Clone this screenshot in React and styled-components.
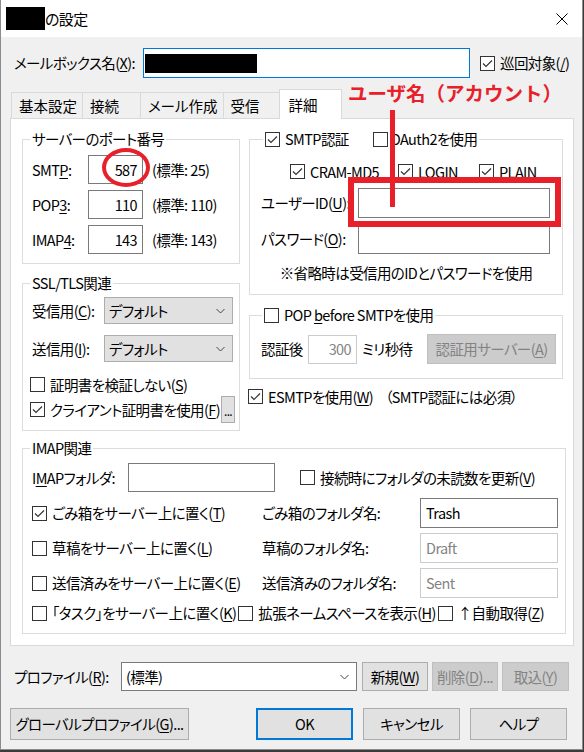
import React from 'react'
import styled, { createGlobalStyle, css } from 'styled-components'

const GlobalStyle = createGlobalStyle`
  html, body { margin: 0; padding: 0; background: #3b3b3b; }
  body {
    font-family: "Noto Sans CJK JP", "Noto Sans", sans-serif;
    font-size: 14.5px;
    letter-spacing: -0.6px;
    color: #000;
    font-feature-settings: "palt";
  }
  * { box-sizing: border-box; }
  u { text-underline-offset: 2px; }
`

// ---- window frame ----
const Window = styled.div`
  position: relative;
  width: 583px;
  height: 750px;
  background: #f0f0f0;
  border: 1px solid #8c8c8c;
  border-top: none;
  display: flex;
  flex-direction: column;
`

const TitleBar = styled.div`
  height: 37px;
  background: #fff;
  display: flex;
  align-items: center;
  padding: 0 14px 0 5px;
  font-size: 15px;
`

const Redact = styled.div`
  background: #000;
  width: ${p => p.$w}px;
  height: ${p => p.$h}px;
`

const TitleText = styled.span`
  flex: 1;
  line-height: 20px;
`

const Body = styled.div`
  padding: 0 8px 0 9px;
  display: flex;
  flex-direction: column;
`

// ---- generic controls ----
const Row = styled.div`
  display: flex;
  align-items: center;
  height: ${p => p.$h || 30}px;
  margin-top: ${p => p.$mt || 0}px;
  margin-left: ${p => p.$ml || 0}px;
  padding-right: ${p => p.$pr || 0}px;
`

const Label = styled.span`
  width: ${p => (p.$w ? `${p.$w}px` : 'auto')};
  flex-shrink: 0;
  white-space: nowrap;
  line-height: 20px;
  margin-left: ${p => p.$ml || 0}px;
`

const TextBox = styled.div`
  width: ${p => p.$w}px;
  height: ${p => p.$h || 29}px;
  flex-shrink: 0;
  background: #fff;
  border: 1px solid ${p => (p.$focus ? '#0078d7' : p.$disabled ? '#cccccc' : '#7a7a7a')};
  color: ${p => (p.$disabled ? '#838383' : '#000')};
  display: flex;
  align-items: center;
  justify-content: ${p => (p.$right ? 'flex-end' : 'flex-start')};
  padding: 0 5px 0 ${p => p.$pl ?? 5}px;
  margin-left: ${p => p.$ml || 0}px;
  line-height: 20px;
`

const Box = styled.span`
  width: 15px;
  height: 15px;
  flex-shrink: 0;
  border: 1px solid #333;
  background: #fff;
  display: inline-flex;
  align-items: center;
  justify-content: center;
`

const CheckWrap = styled.span`
  display: inline-flex;
  align-items: center;
  gap: 5px;
  white-space: nowrap;
  line-height: 20px;
  width: ${p => (p.$w ? `${p.$w}px` : 'auto')};
  flex-shrink: 0;
  margin-left: ${p => (p.$ml === 'auto' ? 'auto' : `${p.$ml || 0}px`)};
`

function Check({ checked, children, w, ml }) {
  return (
    <CheckWrap $w={w} $ml={ml}>
      <Box>
        {checked && (
          <svg width="13" height="13" viewBox="0 0 13 13">
            <polyline points="2,6.5 5,9.5 11,3.5" fill="none" stroke="#333" strokeWidth="1.2" />
          </svg>
        )}
      </Box>
      {children && <span>{children}</span>}
    </CheckWrap>
  )
}

const SelectBox = styled.div`
  width: ${p => p.$w}px;
  height: ${p => p.$h || 27}px;
  flex-shrink: 0;
  display: flex;
  align-items: center;
  justify-content: space-between;
  padding: 0 7px 0 4px;
  line-height: 20px;
  ${p => (p.$white
    ? css`background: #fff; border: 1px solid #7a7a7a;`
    : css`background: #e1e1e1; border: 1px solid #adadad;`)}
`

function Select({ w, h, white, children }) {
  return (
    <SelectBox $w={w} $h={h} $white={white}>
      <span>{children}</span>
      <svg width="9" height="6" viewBox="0 0 9 6">
        <polyline points="0.5,1 4.5,5 8.5,1" fill="none" stroke="#444" strokeWidth="1" />
      </svg>
    </SelectBox>
  )
}

const Button = styled.div`
  width: ${p => p.$w}px;
  height: ${p => p.$h || 30}px;
  flex-shrink: 0;
  display: flex;
  align-items: center;
  justify-content: center;
  white-space: nowrap;
  line-height: 20px;
  margin-left: ${p => (p.$ml === 'auto' ? 'auto' : `${p.$ml || 0}px`)};
  background: ${p => (p.$disabled ? '#cccccc' : '#e1e1e1')};
  border: ${p => (p.$default ? '2px solid #0078d7' : `1px solid ${p.$disabled ? '#bfbfbf' : '#adadad'}`)};
  color: ${p => (p.$disabled ? '#838383' : '#000')};
`

// ---- tabs ----
const TabStrip = styled.div`
  display: flex;
  align-items: flex-end;
  height: 29px;
  margin-top: 11px;
  padding-left: 1px;
`

const Tab = styled.div`
  height: 26px;
  min-width: 59px;
  padding: 0 5px 0 7px;
  display: flex;
  align-items: center;
  background: #f0f0f0;
  border: 1px solid #d9d9d9;
  border-bottom: none;
  margin-right: -1px;
  line-height: 20px;
  letter-spacing: 0;
  ${p => p.$active && css`
    position: relative;
    z-index: 1;
    height: 30px;
    margin: 0 -2px -1px -2px;
    min-width: 63px;
    padding-left: 9px;
    background: #fff;
  `}
`

const Panel = styled.div`
  background: #fff;
  border: 1px solid #d9d9d9;
  padding: 11px 7px 11px 11px;
`

const Columns = styled.div`
  display: flex;
  gap: 9px;
  padding-right: 3px;
`

const Column = styled.div`
  width: ${p => p.$w}px;
  display: flex;
  flex-direction: column;
`

// ---- group boxes ----
const Group = styled.fieldset`
  margin: ${p => p.$mt || 0}px 0 0 0;
  min-width: 0;
  border: 1px solid #dcdcdc;
  padding: ${p => p.$pad};
  display: flex;
  flex-direction: column;
`

const Legend = styled.legend`
  padding: 0 2px;
  margin-left: ${p => p.$ml ?? -2}px;
  line-height: 18px;
  height: 18px;
  display: flex;
  align-items: center;
`

const Stack = styled.div`
  display: flex;
  flex-direction: column;
  gap: ${p => p.$gap || 0}px;
  margin-top: ${p => p.$mt || 0}px;
`

const Hint = styled.span`
  margin-left: 9px;
  white-space: nowrap;
  line-height: 20px;
`

const Note = styled.div`
  margin-top: 9px;
  height: 20px;
  line-height: 20px;
  text-align: center;
`

const DotsButton = styled.div`
  width: 17px;
  height: 27px;
  margin-left: 1px;
  background: #e1e1e1;
  border: 1px solid #adadad;
  display: flex;
  align-items: flex-end;
  justify-content: center;
  padding-bottom: 5px;
  font-size: 12px;
  line-height: 12px;
`

const ImapGrid = styled.div`
  display: grid;
  grid-template-columns: 230px 158px 138px;
  grid-auto-rows: 30px;
  row-gap: 5px;
  margin-top: 6px;
  align-items: center;
`

const Footer = styled.div`
  display: flex;
  align-items: center;
  height: ${p => p.$h}px;
  margin-top: ${p => p.$mt}px;
  padding-left: ${p => p.$pl || 0}px;
`

const ButtonGroup = styled.div`
  display: flex;
  gap: 10px;
  margin-left: auto;
  margin-right: 7px;
`

// ---- red annotations drawn over the dialog ----
const Callout = styled.span`
  position: absolute;
  left: 347px;
  top: 81px;
  color: #e8202a;
  font-size: 19.5px;
  font-weight: 700;
  line-height: 24px;
  letter-spacing: 0;
  font-feature-settings: normal;
  white-space: nowrap;
`

const CalloutLine = styled.div`
  position: absolute;
  left: 389px;
  top: 110px;
  width: 5px;
  height: 97px;
  background: #e8202a;
`

const CalloutRect = styled.div`
  position: absolute;
  left: 347px;
  top: 177px;
  width: 213px;
  height: 50px;
  border: 6px solid #e8202a;
`

const CalloutRing = styled.div`
  position: absolute;
  left: 101px;
  top: 148px;
  width: 48px;
  height: 39px;
  border: 4px solid #e8202a;
  border-radius: 50%;
`

export default function App() {
  return (
    <>
      <GlobalStyle />
      <Window>
        <TitleBar>
          <Redact $w={39} $h={23} />
          <TitleText>の設定</TitleText>
          <svg width="12" height="12" viewBox="0 0 12 12">
            <path d="M0.5 0.5 L11.5 11.5 M11.5 0.5 L0.5 11.5" stroke="#000" strokeWidth="1" />
          </svg>
        </TitleBar>

        <Body>
          <Row $h={30} $mt={11} $ml={4}>
            <Label $w={129}>メールボックス名(<u>X</u>):</Label>
            <TextBox $w={327} $h={30} $focus $pl={1}>
              <Redact $w={112} $h={19} />
            </TextBox>
            <Check checked ml={10}>巡回対象(<u>/</u>)</Check>
          </Row>

          <TabStrip>
            <Tab>基本設定</Tab>
            <Tab>接続</Tab>
            <Tab>メール作成</Tab>
            <Tab>受信</Tab>
            <Tab $active>詳細</Tab>
          </TabStrip>

          <Panel>
            <Columns>
              <Column $w={218}>
                <Group $pad="7px 9px 9px 9px">
                  <Legend>サーバーのポート番号</Legend>
                  <Stack $gap={6}>
                    <Row $h={29}>
                      <Label $w={56}>SMT<u>P</u>:</Label>
                      <TextBox $w={55} $right>587</TextBox>
                      <Hint>(標準: 25)</Hint>
                    </Row>
                    <Row $h={29}>
                      <Label $w={56}>POP<u>3</u>:</Label>
                      <TextBox $w={55} $right>110</TextBox>
                      <Hint>(標準: 110)</Hint>
                    </Row>
                    <Row $h={29}>
                      <Label $w={56}>IMAP<u>4</u>:</Label>
                      <TextBox $w={55} $right>143</TextBox>
                      <Hint>(標準: 143)</Hint>
                    </Row>
                  </Stack>
                </Group>

                <Group $mt={10} $pad="5px 4px 7px 9px">
                  <Legend>SSL/TLS関連</Legend>
                  <Stack $gap={11}>
                    <Row $h={27}>
                      <Label $w={72}>受信用(<u>C</u>):</Label>
                      <Select w={129}>デフォルト</Select>
                    </Row>
                    <Row $h={27}>
                      <Label $w={72}>送信用(<u>I</u>):</Label>
                      <Select w={129}>デフォルト</Select>
                    </Row>
                  </Stack>
                  <Row $h={23} $mt={11} $ml={-2}>
                    <Check>証明書を検証しない(<u>S</u>)</Check>
                  </Row>
                  <Row $h={27} $ml={-2}>
                    <Check checked>クライアント証明書を使用(<u>F</u>)</Check>
                    <DotsButton>...</DotsButton>
                  </Row>
                </Group>
              </Column>

              <Column $w={314}>
                <Group $pad="14px 11px 11px 11px">
                  <Legend $ml={2}>
                    <Check checked w={108}>SMTP認証</Check>
                    <CheckWrap>
                      <Box />
                      <span style={{ marginLeft: -3 }}>OAuth2を使用</span>
                    </CheckWrap>
                  </Legend>
                  <Row $h={19} $ml={29}>
                    <Check checked w={108}>CRAM-MD5</Check>
                    <Check checked w={81}>LOGIN</Check>
                    <Check checked>PLAIN</Check>
                  </Row>
                  <Row $h={30} $mt={7}>
                    <Label $w={97}>ユーザーID(<u>U</u>):</Label>
                    <TextBox $w={192} $h={30} />
                  </Row>
                  <Row $h={30} $mt={6}>
                    <Label $w={97}>パスワード(<u>O</u>):</Label>
                    <TextBox $w={192} $h={30} />
                  </Row>
                  <Note>※省略時は受信用のIDとパスワードを使用</Note>
                </Group>

                <Group $mt={11} $pad="10px 6px 14px 11px">
                  <Legend $ml={1}>
                    <Check>POP <u>b</u>efore SMTPを使用</Check>
                  </Legend>
                  <Row $h={30}>
                    <Label $w={47}>認証後</Label>
                    <TextBox $w={49} $disabled $right>300</TextBox>
                    <Label $ml={5}>ミリ秒待</Label>
                    <Button $w={129} $h={30} $ml="auto" $disabled>
                      認証用サーバー(<u>A</u>)
                    </Button>
                  </Row>
                </Group>

                <Row $h={19} $mt={8} $ml={-1}>
                  <Check checked>ESMTPを使用(<u>W</u>)</Check>
                  <Label $ml={12}>（SMTP認証には必須）</Label>
                </Row>
              </Column>
            </Columns>

            <Group $mt={8} $pad="6px 7px 10px 9px">
              <Legend>IMAP関連</Legend>
              <Row $h={29}>
                <Label $w={96}>I<u>M</u>APフォルダ:</Label>
                <TextBox $w={147} />
                <Check ml={25}>接続時にフォルダの未読数を更新(<u>V</u>)</Check>
              </Row>
              <ImapGrid>
                <Check checked>ごみ箱をサーバー上に置く(<u>T</u>)</Check>
                <Label>ごみ箱のフォルダ名:</Label>
                <TextBox $w={138} $h={30}>Trash</TextBox>

                <Check>草稿をサーバー上に置く(<u>L</u>)</Check>
                <Label>草稿のフォルダ名:</Label>
                <TextBox $w={138} $h={30} $disabled>Draft</TextBox>

                <Check>送信済みをサーバー上に置く(<u>E</u>)</Check>
                <Label>送信済みのフォルダ名:</Label>
                <TextBox $w={138} $h={30} $disabled>Sent</TextBox>
              </ImapGrid>
              <Row $h={20} $mt={5} $pr={14}>
                <Check>「タスク」をサーバー上に置く(<u>K</u>)</Check>
                <Check ml={2}>拡張ネームスペースを表示(<u>H</u>)</Check>
                <Check ml="auto">↑自動取得(<u>Z</u>)</Check>
              </Row>
            </Group>
          </Panel>

          <Footer $h={29} $mt={16} $pl={4}>
            <Label $w={107}>プロファイル(<u>R</u>):</Label>
            <Select w={236} h={29} white>(標準)</Select>
            <Button $w={66} $h={29} $ml={5}>新規(<u>W</u>)</Button>
            <Button $w={66} $h={29} $ml={4} $disabled>削除(<u>D</u>)...</Button>
            <Button $w={67} $h={29} $ml={4} $disabled>取込(<u>Y</u>)</Button>
          </Footer>

          <Footer $h={32} $mt={17}>
            <Button $w={179} $h={32}>グローバルプロファイル(<u>G</u>)...</Button>
            <ButtonGroup>
              <Button $w={97} $h={32} $default>OK</Button>
              <Button $w={97} $h={32}>キャンセル</Button>
              <Button $w={97} $h={32}>ヘルプ</Button>
            </ButtonGroup>
          </Footer>
        </Body>

        <Callout>ユーザ名（アカウント）</Callout>
        <CalloutLine />
        <CalloutRect />
        <CalloutRing />
      </Window>
    </>
  )
}
